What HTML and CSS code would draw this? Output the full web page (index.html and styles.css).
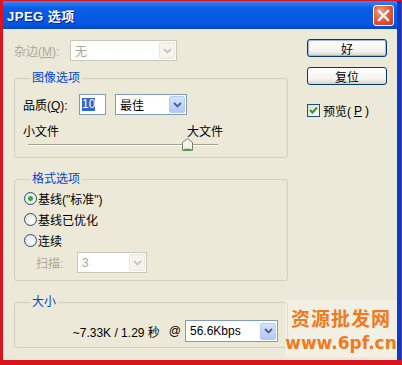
FILE: index.html
```html
<!DOCTYPE html>
<html lang="zh-CN">
<head>
    <meta charset="UTF-8">
    <title>JPEG 选项</title>
    <link rel="stylesheet" href="styles.css">
</head>
<body>

<div class="window">
    <div class="frame">
        <div class="titlebar">
            <span class="title">JPEG 选项</span>
            <span class="close">
                <svg width="13" height="13" viewBox="0 0 13 13"><path d="M2 2 L11 11 M11 2 L2 11" stroke="#fff" stroke-width="2.4" stroke-linecap="square"/></svg>
            </span>
        </div>

        <div class="client">
            <div class="main">
                <div class="row matte">
                    <span class="label disabled">杂边(<u>M</u>):</span>
                    <div class="select off matte-select">
                        <span class="value">无</span>
                        <span class="arrow"><svg width="9" height="6" viewBox="0 0 9 6"><path d="M1 1 L4.5 4.5 L8 1" fill="none" stroke="#c9c7ba" stroke-width="1.8"/></svg></span>
                    </div>
                </div>

                <fieldset class="group image-group">
                    <legend>图像选项</legend>
                    <div class="row quality">
                        <span class="label">品质(<u>Q</u>):</span>
                        <div class="textbox"><span class="selected">10</span></div>
                        <div class="select quality-select">
                            <span class="value">最佳</span>
                            <span class="arrow"><svg width="9" height="6" viewBox="0 0 9 6"><path d="M1 1 L4.5 4.5 L8 1" fill="none" stroke="#4d6185" stroke-width="1.8"/></svg></span>
                        </div>
                    </div>
                    <div class="size-labels">
                        <span>小文件</span>
                        <span>大文件</span>
                    </div>
                    <div class="slider">
                        <div class="track"></div>
                        <svg class="thumb" width="11" height="13" viewBox="0 0 11 13">
                            <path d="M0.5 12.5 V4.5 L5.5 0.5 L10.5 4.5 V12.5 Z" fill="#f4f3ee" stroke="#6a8a6a"/>
                            <path d="M1.5 11.5 H9.5" stroke="#3ea83e" stroke-width="1.5"/>
                        </svg>
                    </div>
                </fieldset>

                <fieldset class="group format-group">
                    <legend>格式选项</legend>
                    <label class="radio-row"><span class="radio checked"></span>基线("标准")</label>
                    <label class="radio-row"><span class="radio"></span>基线已优化</label>
                    <label class="radio-row"><span class="radio"></span>连续</label>
                    <div class="row scan">
                        <span class="label disabled">扫描:</span>
                        <div class="select off scan-select">
                            <span class="value">3</span>
                            <span class="arrow"><svg width="9" height="6" viewBox="0 0 9 6"><path d="M1 1 L4.5 4.5 L8 1" fill="none" stroke="#c9c7ba" stroke-width="1.8"/></svg></span>
                        </div>
                    </div>
                </fieldset>

                <fieldset class="group size-group">
                    <legend>大小</legend>
                    <div class="row estimate">
                        <span class="info">~7.33K / 1.29 秒</span>
                        <span class="at">@</span>
                        <div class="select speed-select">
                            <span class="value">56.6Kbps</span>
                            <span class="arrow"><svg width="9" height="6" viewBox="0 0 9 6"><path d="M1 1 L4.5 4.5 L8 1" fill="none" stroke="#4d6185" stroke-width="1.8"/></svg></span>
                        </div>
                    </div>
                </fieldset>
            </div>

            <div class="side">
                <button class="btn default">好</button>
                <button class="btn">复位</button>
                <label class="check">
                    <span class="box"><svg width="9" height="9" viewBox="0 0 9 9"><path d="M1 4 L3.5 6.5 L8 1.5" fill="none" stroke="#21a121" stroke-width="2"/></svg></span>
                    预览(<u>P</u>)
                </label>
            </div>

            <div class="watermark">
                <span class="wm-cn">资源批发网</span>
                <span class="wm-url">www.6pf.cn</span>
            </div>
        </div>
    </div>
</div>

</body>
</html>
```

FILE: styles.css
```css
* {
    box-sizing: border-box;
}

body {
    margin: 0;
    font-family: "Liberation Sans", "Noto Sans CJK SC", sans-serif;
    font-size: 12px;
    color: #000;
}

.window {
    width: 402px;
    height: 365px;
    background: #d8141e;
    padding: 1px 1px 5px 3px;
}

.frame {
    height: 100%;
    display: flex;
    flex-direction: column;
    background: #ece9d8;
    border-right: 4px solid #0a3ccc;
}

.titlebar {
    height: 28px;
    flex: none;
    display: flex;
    align-items: center;
    justify-content: space-between;
    padding: 0 3px 0 4px;
    background: linear-gradient(#3a86f4, #0a5de6 25%, #0556e2 80%, #0349c8);
}

.title {
    color: #fff;
    font-weight: bold;
    font-size: 13px;
    letter-spacing: 0.5px;
    text-shadow: 1px 1px #0a1e8c;
}

.close {
    width: 21px;
    height: 21px;
    border: 1px solid #fff;
    border-radius: 3px;
    background: radial-gradient(circle at 35% 30%, #f29a7c, #e0553a 55%, #c2391e);
    display: flex;
    align-items: center;
    justify-content: center;
}

.client {
    flex: 1;
    position: relative;
    display: flex;
    padding: 10px 0 0 11px;
}

.main {
    width: 274px;
}

.side {
    margin-left: 19px;
    width: 80px;
    display: flex;
    flex-direction: column;
}

/* rows and labels */
.row {
    display: flex;
    align-items: center;
}

.label {
    white-space: nowrap;
}

.disabled {
    color: #aca899;
}

.matte {
    margin-top: 1px;
    height: 21px;
}

.matte .label {
    width: 56px;
}

/* group boxes */
.group {
    margin: 0;
    border: 1px solid #d0d0bf;
    border-radius: 3px;
    padding: 10px 8px 6px 8px;
}

.group legend {
    color: #0046d5;
    line-height: 12px;
    padding: 0 2px;
    margin-left: 7px;
}

.image-group {
    margin-top: 11px;
}

.format-group {
    margin-top: 15px;
    padding-top: 3px;
    padding-bottom: 7px;
}

.size-group {
    margin-top: 15px;
    padding-top: 12px;
    padding-bottom: 5px;
}

/* combo boxes */
.select {
    height: 21px;
    border: 1px solid #7f9db9;
    background: #fff;
    display: flex;
    align-items: center;
    justify-content: space-between;
    padding: 1px 1px 1px 4px;
}

.select .arrow {
    width: 16px;
    height: 17px;
    border: 1px solid #b9cbf3;
    border-radius: 2px;
    background: linear-gradient(#d6e2fd, #b1c8f6);
    display: flex;
    align-items: center;
    justify-content: center;
}

.select.off {
    border-color: #c9c7ba;
    color: #aca899;
}

.select.off .arrow {
    border-color: #e8e6de;
    background: #f4f3ee;
}

.matte-select {
    width: 107px;
}

.quality-select {
    width: 72px;
    margin-left: 9px;
}

.scan-select {
    width: 70px;
    margin-left: 12px;
}

.speed-select {
    width: 93px;
    height: 22px;
    margin-left: 4px;
}

/* quality */
.quality {
    height: 21px;
}

.quality .label {
    width: 56px;
}

.textbox {
    width: 27px;
    height: 21px;
    border: 1px solid #7f9db9;
    background: #fff;
    padding: 3px 2px;
    display: flex;
    align-items: center;
}

.selected {
    background: #316ac5;
    color: #fff;
    line-height: 13px;
}

.size-labels {
    display: flex;
    justify-content: space-between;
    width: 200px;
    margin-top: 10px;
    line-height: 14px;
}

.slider {
    position: relative;
    width: 190px;
    height: 13px;
    margin: -1px 0 0 5px;
}

.track {
    position: absolute;
    left: 0;
    right: 0;
    top: 6px;
    height: 2px;
    border-top: 1px solid #a5a397;
    border-bottom: 1px solid #fff;
}

.thumb {
    position: absolute;
    left: 154px;
    top: 0;
}

/* radios */
.radio-row {
    display: flex;
    align-items: center;
    height: 20px;
    margin-bottom: 1px;
}

.radio {
    width: 13px;
    height: 13px;
    border: 1px solid #1c5180;
    border-radius: 50%;
    background: radial-gradient(circle at 60% 65%, #fff, #dcdad4);
    margin: 0 1px 0 1px;
    display: flex;
    align-items: center;
    justify-content: center;
}

.radio.checked::after {
    content: "";
    width: 5px;
    height: 5px;
    border-radius: 50%;
    background: #3aa53a;
}

.scan {
    margin-top: 2px;
    height: 21px;
    padding-left: 13px;
}

.scan .label {
    width: 29px;
}

/* size estimate */
.estimate {
    justify-content: flex-end;
    padding-right: 1px;
    height: 22px;
}

.at {
    margin-left: 9px;
}

/* buttons */
.btn {
    width: 80px;
    height: 18px;
    padding: 0;
    font: inherit;
    border: 1px solid #003c74;
    border-radius: 3px;
    background: linear-gradient(#fff, #f4f3ee 70%, #d6d0c5);
    margin-bottom: 10px;
}

.btn.default {
    box-shadow: inset 0 0 0 1px #9db6ec;
}

.check {
    display: flex;
    align-items: center;
    margin-top: 7px;
    gap: 3px;
}

.box {
    width: 13px;
    height: 13px;
    border: 1px solid #1c5180;
    background: linear-gradient(135deg, #dcdad4, #fff);
    display: flex;
    align-items: center;
    justify-content: center;
}

/* watermark */
.watermark {
    position: absolute;
    left: 282px;
    top: 271px;
    width: 112px;
    height: 57px;
    background: rgba(255, 255, 255, 0.35);
    display: flex;
    flex-direction: column;
    align-items: center;
    color: #f07a1c;
    font-weight: bold;
}

.wm-cn {
    font-family: "Noto Sans CJK SC", sans-serif;
    font-size: 19px;
    line-height: 22px;
    margin-top: 7px;
    letter-spacing: 1px;
}

.wm-url {
    font-family: "DejaVu Sans", sans-serif;
    font-size: 17px;
    line-height: 20px;
    margin-top: 4px;
}
```
